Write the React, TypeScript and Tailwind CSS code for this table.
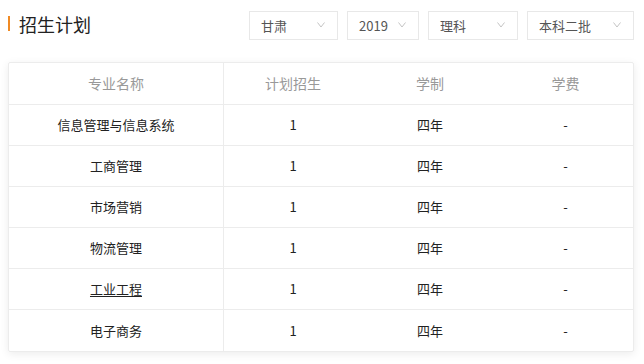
const rows = [
  { name: "信息管理与信息系统", plan: "1", years: "四年", fee: "-" },
  { name: "工商管理", plan: "1", years: "四年", fee: "-" },
  { name: "市场营销", plan: "1", years: "四年", fee: "-" },
  { name: "物流管理", plan: "1", years: "四年", fee: "-" },
  { name: "工业工程", plan: "1", years: "四年", fee: "-", underline: true },
  { name: "电子商务", plan: "1", years: "四年", fee: "-" },
];

const Select = ({ label, width }: { label: string; width: string }) => (
  <div
    className={`${width} relative h-[29px] border border-[#e8e8e8] bg-white flex items-center pl-[11px] text-[13px] text-[#555]`}
  >
    <span>{label}</span>
    <svg
      width="8"
      height="6"
      viewBox="0 0 8 6"
      className="absolute right-[12px] top-[10px] text-[#c4c4c4]"
    >
      <path d="M0.5 0.5 L4 5 L7.5 0.5" fill="none" stroke="currentColor" strokeWidth="1" />
    </svg>
  </div>
);

function App() {
  return (
    <div
      className="w-[644px] h-[364px] bg-white overflow-hidden"
      style={{ fontFamily: '"Noto Sans CJK SC", "Liberation Sans", sans-serif' }}
    >
      <div className="flex items-center justify-between pl-[8px] pr-[10px] pt-[11px] h-[40px]">
        <div className="flex items-center gap-[9px] mb-[4px]">
          <div className="w-[2px] h-[15px] bg-[#f08a24]" />
          <span className="text-[18px] text-[#222] leading-none">招生计划</span>
        </div>
        <div className="flex gap-[9px]">
          <Select label="甘肃" width="w-[89px]" />
          <Select label="2019" width="w-[72px]" />
          <Select label="理科" width="w-[90px]" />
          <Select label="本科二批" width="w-[107px]" />
        </div>
      </div>

      <div className="mt-[22px] ml-[8px] w-[626px] border border-[#ececec] shadow-[0_2px_8px_rgba(0,0,0,0.08)] rounded-[2px]">
        <div className="grid grid-cols-[215px_138px_136px_1fr] h-[42px] items-center text-[14px] text-[#999] border-b border-[#ececec]">
          <div className="text-center h-full flex items-center justify-center border-r border-[#ececec]">专业名称</div>
          <div className="text-center">计划招生</div>
          <div className="text-center">学制</div>
          <div className="text-center">学费</div>
        </div>
        {rows.map((r, i) => (
          <div
            key={i}
            className={`grid grid-cols-[215px_138px_136px_1fr] h-[41px] items-center text-[13px] text-[#222] ${i < rows.length - 1 ? "border-b border-[#ececec]" : ""}`}
          >
            <div className="h-full flex items-center justify-center border-r border-[#ececec]">
              <span className={r.underline ? "underline underline-offset-2" : ""}>{r.name}</span>
            </div>
            <div className="text-center">{r.plan}</div>
            <div className="text-center">{r.years}</div>
            <div className="text-center">{r.fee}</div>
          </div>
        ))}
      </div>
    </div>
  );
}

export default App;
